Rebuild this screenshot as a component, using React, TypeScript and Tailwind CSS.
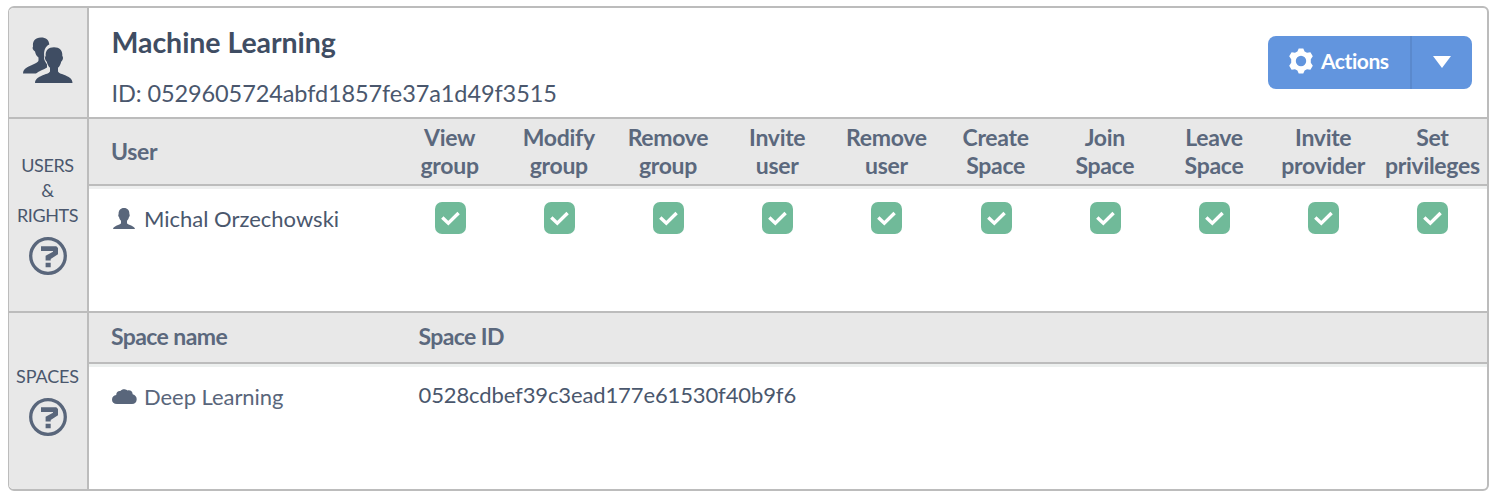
import React from "react";

const privileges: [string, string][] = [
  ["View", "group"],
  ["Modify", "group"],
  ["Remove", "group"],
  ["Invite", "user"],
  ["Remove", "user"],
  ["Create", "Space"],
  ["Join", "Space"],
  ["Leave", "Space"],
  ["Invite", "provider"],
  ["Set", "privileges"],
];

const PERSON =
  "M11 0C14.6 0 16.6 2.4 16.4 6.2C17 6.6 16.8 8.4 16 9C15.6 10.8 14.9 11.9 14 12.8V15.2C15.2 17.2 21.4 17.4 22 21H0C.6 17.4 6.800 17.2 8 15.2V12.8C7.100 11.900 6.400 10.800 6 9C5.200 8.400 5 6.600 5.600 6.200C5.400 2.400 7.400 0 11 0Z";

function GroupIcon() {
  return (
    <svg className="block" width="50" height="47" viewBox="0 0 50 47" fill="#3f4d63">
      <path d="M18 .5C23 .5 26 3 26.300 7.500C22 9.500 20.500 14 21.300 20C20.300 22 22.500 25 24 27.500V30.500C21 33 16 33.500 13 36.500H0C0 31 6 29.500 10 27.500C13 26.200 15.500 25 15.500 23.500V20.500C13.500 19 12.500 17 12 14.500C9.800 13 9 11 10 9.500C9.500 4 12 .5 18 .5Z" />
      <path d="M31 10.300C36.500 10.300 39.800 13.500 39.300 19C40.600 20 40 23.500 38.300 24.500C37.600 27.500 36.500 29.500 35 30.800V34.500C36.500 38 49.500 38 49.500 46H12C12.500 38 25.500 38 27 34.500V30.800C25.500 29.500 24.400 27.500 23.700 24.500C22 23.500 21.400 20 22.700 19C22.200 13.500 25.500 10.300 31 10.300Z" />
    </svg>
  );
}

function HelpIcon() {
  return (
    <svg className="block" width="38" height="38" viewBox="-19 -19 38 38" fill="#59667b">
      <circle r="17.300" fill="none" stroke="#59667b" strokeWidth="3.300" />
      <path d="M-7-9.700H8.300L10-8V-1.800L2.700 3V4.600H-2.400V-.2L5-4.200V-5H-7ZM-2.400 6.800H2.700V11.200H-2.400Z" />
    </svg>
  );
}

function GearIcon() {
  return (
    <svg className="block" width="24" height="26" viewBox="-12 -13 24 26" fill="#fff">
      <path
        fillRule="evenodd"
        d="M-2.300-12.500H2.300L3.600-9.400L6-8.200L9.400-8.700L11.800-4.700L9.800-1.800V1.800L11.800 4.700L9.400 8.700L6 8.200L3.600 9.400L2.300 12.500H-2.300L-3.600 9.400L-6 8.200L-9.400 8.700L-11.800 4.700L-9.800 1.800V-1.800L-11.800-4.700L-9.400-8.700L-6-8.200L-3.600-9.400ZM0-5.200A5.200 5.200 0 1 0 0 5.200A5.200 5.200 0 1 0 0-5.200Z"
      />
    </svg>
  );
}

function Check() {
  return (
    <span className="flex h-8 w-[31px] items-center justify-center rounded-[7px] bg-[#70ba99]">
      <svg width="19" height="15" viewBox="0 0 19 15" fill="none" stroke="#fff" strokeWidth="3.400">
        <path d="M1.300 6.500L7.300 12.200L17.600 2" />
      </svg>
    </span>
  );
}

export default function App() {
  return (
    <div className="h-[500px] w-[1500px] bg-white pl-2 pt-1.5 font-['Lato',sans-serif] text-[#4a576d]">
      <div className="flex h-[485px] w-[1481px] flex-col overflow-hidden rounded-[6px] border-2 border-l border-[#bcbcbc]">
        <header className="flex h-[111px] shrink-0 border-b-2 border-[#bcbcbc]">
          <div className="w-20 shrink-0 border-r-2 border-[#bcbcbc] bg-[#e8e8e8] pl-3.5 pt-[29px]">
            <GroupIcon />
          </div>
          <div className="flex-1 pl-[22.5px] pt-4">
            <h1 className="text-[28.5px] font-bold leading-9 tracking-[-0.05px] text-[#3f4d63]">Machine Learning</h1>
            <p className="mt-[18px] text-[23.5px] leading-[30px] tracking-[-0.1px]">
              ID: 0529605724abfd1857fe37a1d49f3515
            </p>
          </div>
          <div className="mr-[15px] mt-7 flex h-[53px] w-[204px] overflow-hidden rounded-[8px] bg-[#6295de] text-white">
            <button className="flex w-[144px] items-center border-r-2 border-[#5a89cd] pb-[3px] pl-[21px] text-[21px] font-bold tracking-[-0.45px]">
              <GearIcon />
              <span className="ml-2">Actions</span>
            </button>
            <button className="flex flex-1 items-center justify-center pb-px">
              <svg width="18" height="12" viewBox="0 0 18 12" fill="#fff">
                <path d="M0 0H18L9 12Z" />
              </svg>
            </button>
          </div>
        </header>

        <section className="flex h-[194px] shrink-0 border-b-2 border-[#bcbcbc]">
          <div className="flex w-20 shrink-0 flex-col items-center border-r-2 border-[#bcbcbc] bg-[#e8e8e8] pr-px pt-[34px] text-center text-[18px] leading-[25px] tracking-[-0.4px]">
            <span>USERS</span>
            <span>&amp;</span>
            <span>RIGHTS</span>
            <span className="mt-[8.500px]">
              <HelpIcon />
            </span>
          </div>
          <div className="flex-1">
            <div className="flex h-[67px] border-b-2 border-[#bcbcbc] bg-[#e8e8e8] text-[23px] font-bold leading-7 tracking-[-0.3px] text-[#5b687d]">
              <div className="flex w-[306px] items-center pb-[2px] pl-[22px]">User</div>
              <div className="grid flex-1 grid-cols-10 pt-1 text-center">
                {privileges.map(([a, b]) => (
                  <div key={a + b} className="flex flex-col items-center whitespace-nowrap">
                    <span>{a}</span>
                    <span>{b}</span>
                  </div>
                ))}
              </div>
            </div>
            <div className="h-[3px] bg-[#eeefef]" />
            <div className="flex pt-[13px]">
              <div className="flex w-[306px] items-center pl-6 text-[22px] leading-8">
                <svg width="22" height="22" viewBox="0 0 22 22" fill="#59667b">
                  <path d={PERSON} />
                </svg>
                <span className="ml-[9px] pt-px">Michal Orzechowski</span>
              </div>
              <div className="grid flex-1 grid-cols-10 justify-items-center pl-px">
                {privileges.map(([a, b]) => (
                  <Check key={a + b} />
                ))}
              </div>
            </div>
          </div>
        </section>

        <section className="flex flex-1">
          <div className="flex w-20 shrink-0 flex-col items-center border-r-2 border-[#bcbcbc] bg-[#e8e8e8] pr-px pt-[51px] text-[18px] leading-[25px] tracking-[-0.15px]">
            <span>SPACES</span>
            <span className="mt-[8.500px]">
              <HelpIcon />
            </span>
          </div>
          <div className="flex-1">
            <div className="flex h-[51px] items-center border-b-2 border-[#bcbcbc] bg-[#e8e8e8] pb-[2px] pl-[22px] text-[23px] font-bold tracking-[-0.6px] text-[#5b687d]">
              <span className="w-[307.5px]">Space name</span>
              <span>Space ID</span>
            </div>
            <div className="h-[3px] bg-[#edf0ef]" />
            <div className="flex items-center pl-[23px] pt-3 text-[22px] leading-8">
              <div className="flex w-[306.5px] items-center text-[#59667b]">
                <svg width="25" height="15" viewBox="0 0 25 15" fill="#59667b">
                  <path d="M5 15C1.800 15 0 13.200 0 10.700C0 8 1.700 6.200 4.200 6C4.300 3.500 6 1.800 8.300 2.100C9.500 .6 11 0 12.600 .2C14 .3 14.700 .8 15.300 1.500C18.500 .8 20.500 2.500 20.700 5.300C23.300 6 24.700 8 24.700 10.300C24.700 13.200 22.800 15 20 15Z" />
                </svg>
                <span className="ml-[7px] tracking-[-0.05px]">Deep Learning</span>
              </div>
              <span className="pb-[3px] tracking-[-0.12px]">0528cdbef39c3ead177e61530f40b9f6</span>
            </div>
          </div>
        </section>
      </div>
    </div>
  );
}
